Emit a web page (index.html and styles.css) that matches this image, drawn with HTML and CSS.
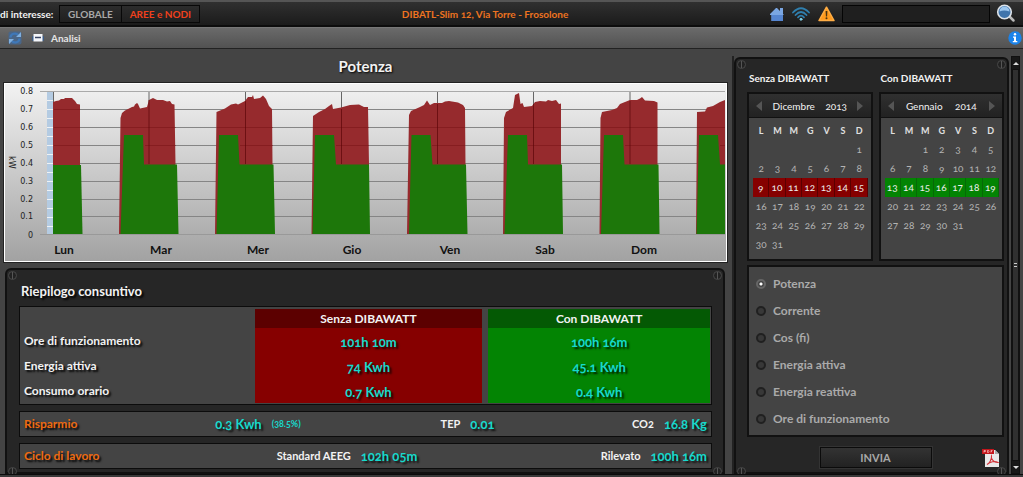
FILE: index.html
```html
<!DOCTYPE html>
<html lang="it">
<head>
<meta charset="utf-8">
<title>DIBAWATT - Analisi</title>
<link rel="stylesheet" href="styles.css">
</head>
<body>
<header class="topbar">
  <span class="topbar-label">di interesse:</span>
  <div class="segmented">
    <button type="button">GLOBALE</button>
    <button type="button" class="active">AREE e NODI</button>
  </div>
  <div class="site">DIBATL-Slim 12, Via Torre - Frosolone</div>
  <div class="status">
    <svg width="14" height="14" viewBox="0 0 14 14"><path d="M0 7 6 1l1 0 3 3V1h3v6l1 1h-1v6H1.500V8H0z" fill="#7aa6e2"/><path d="M1.500 8H13v6h-11.500z" fill="#5585d0"/></svg>
    <svg width="18" height="14" viewBox="0 0 18 14" fill="none" stroke="#2f7fae" stroke-width="1.800" stroke-linecap="round"><path d="M1 5.500Q9-3 17 5.500"/><path d="M3.500 8Q9 2 14.500 8"/><path d="M6 10.300Q9 7 12 10.300"/><circle cx="9" cy="12.300" r="1" fill="#7fd0e8" stroke="#7fd0e8" stroke-width="1"/></svg>
    <svg width="17" height="16" viewBox="0 0 17 16"><path d="M8.500 1.200 16 14.500H1z" fill="#ff9a1c" stroke="#ffad45" stroke-width="1.500" stroke-linejoin="round"/><path d="M7.600 5h1.800l-.3 5.500H7.900z" fill="#4a3413"/><circle cx="8.500" cy="12.300" r="1" fill="#4a3413"/></svg>
  </div>
  <input class="search" type="text" aria-label="Cerca">
  <button type="button" class="icon-button search-button" aria-label="Avvia ricerca">
    <svg width="20" height="19" viewBox="0 0 20 19"><path d="m13 12 4.500 4.500" stroke="#b9b9b9" stroke-width="2.500" stroke-linecap="round"/><circle cx="8.500" cy="8" r="6.800" fill="#3f74ac" stroke="#dce2e8" stroke-width="1.600"/><path d="M3.500 7.500a5 5 0 0 1 10 0Q8 5.500 3.500 7.500z" fill="#9cc6ee"/></svg>
  </button>
</header>

<nav class="toolbar">
  <button type="button" class="icon-button" aria-label="Aggiorna">
    <svg width="14" height="14" viewBox="0 0 14 14" fill="none" stroke="#3f78b8" stroke-width="2.200"><rect x=".5" y=".5" width="13" height="13" rx="2" fill="#4a6688" stroke="none"/><path d="M2.500 6.500C2.500 2.500 8 1.500 10 4"/><path d="M11.500 7.500C11.500 11.500 6 12.500 4 10"/><path d="M13 1v5H8zM1 13V8h5z" fill="#7fb0e0" stroke="none"/></svg>
  </button>
  <svg class="sheet" width="12" height="10" viewBox="0 0 12 10"><rect x="0" y="3" width="12" height="5" rx="1" fill="#3c5c86"/><rect x="1.500" y="1" width="9" height="7.500" fill="#f4f6fa"/><path d="M3 4.500h6" stroke="#3a4664" stroke-width="1.500"/></svg>
  <span class="toolbar-title">Analisi</span>
  <button type="button" class="icon-button info" aria-label="Informazioni">
    <svg width="14" height="14" viewBox="0 0 14 14"><circle cx="7" cy="7" r="6.700" fill="#1b83ea"/><path d="M5 5.500h3V10h1.300v1.200H4.800V10H6V6.700H5z" fill="#fff"/><circle cx="7" cy="3.300" r="1.200" fill="#fff"/></svg>
  </button>
</nav>

<main class="workspace">
  <section class="left">
    <h1 class="chart-title">Potenza</h1>
    <figure class="chart">
      <svg viewBox="5 84 721 177" role="img" aria-label="Potenza in kW per giorno della settimana">
        <path d="M47 91.500h6v143h-6z" fill="#b4cbe2"/>
        <path d="M47 100.500h6m-6 9h6m-6 9h6m-6 9h6m-6 9h6m-6 9h6m-6 9h6m-6 9h6m-6 9h6m-6 9h6m-6 9h6m-6 9h6m-6 9h6m-6 9h6m-6 9h6" stroke="#eef2f6"/>
        <path d="M40 91.500h685" stroke="#aaa"/>
        <path d="M53 109.500h672M53 127.500h672M53 145.500h672M53 163.500h672M53 181.500h672M53 199.500h672M53 216.500h672" stroke="#858585"/>
        <path d="M40 234.500h685" stroke="#999"/>
        <path d="M53.500 92v142M149 92v142M245.500 92v142M341.500 92v142M437.500 92v142M533.500 92v142M630 92v142" stroke="#666"/>
        <g fill="#962a2d">
          <path d="M53 234V102l3-1 3-.5 2-1.500h3l1-1h7l3 3 2 3 3 .5V234z"/>
          <path d="M119 234 120.500 118l1.500-5 3-2.500 7-3.500 2-.500 1-2 2-1.500 1 1 2 4.500 7-1.500 2-7 4-2 2 1 2 1 6 0 4 1.500 3-.500 2 3 2.500.5 1 60V234z"/>
          <path d="M215 234 216.500 112l8.500-3.500 6-4 5-1 2 1 7-3.500 3-4h4l1-2 1 4 6-1 3-2.500 3 3.500 3 7 3 3 .5 55V234z"/>
          <path d="M311.500 234 313 116l6-4 6-3 4-3 3-2 1 5 8-1.500 9-2.500 9-.5 5 2.500 4 0 1 58V234z"/>
          <path d="M407 234 409 115l2-4 9-4 4-2 3-4.500 3 4.500 4-2h8l3-1.500 4-.5 9 1.500 5 2.500 2 3 .5 58V234z"/>
          <path d="M503 234 504 118l2-6 7-4 2-13 4-2 1.500 11 2-1 1.500 4 8-1 3-4 5-1 6 .5 2-1.500 4 1 4-1 3 4 2-.500V234z"/>
          <path d="M599.500 234 600.500 118l1.500-6 10-2 5-2 3-4 10-4 7 0 3-1.500 2-1.500 3 3.500 9 .5 3.500 1.500V234z"/>
          <path d="M696 234 697 112l8-.500 2-4 6-1.500 7-4 5-2V234z"/>
        </g>
        <g fill="#1d770a">
          <path d="M53 234v-69h28l1.500 69z"/>
          <path d="M120.500 234 124 135h19l1 29.500h33l1.500 69.500z"/>
          <path d="M216.500 234 219 135h19l1.500 29.500h34L275 234z"/>
          <path d="M312.500 234 315 135h19l2 29.500h33L370 234z"/>
          <path d="M409 234 411.500 135h19l2 29.500h33.500l1.500 69.500z"/>
          <path d="M504.500 234 508 135h19l1 29.500h34l1 69.500z"/>
          <path d="M601 234 604 135h19l1.500 29.500h34l1 69.500z"/>
          <path d="M696.500 234 699 135h19l2 29.500h5V234z"/>
        </g>
        <path d="M54 109.500h26M54 127.500h26M54 145.500h26M121 127.500h55M145 145.500h31M217 127.500h56M240 145.500h33M313 127.500h56M336 145.500h33M409 127.500h56M432 145.500h33M505 127.500h56M528 145.500h33M601 127.500h57M625 145.500h33M697 127.500h28M720 145.500h5" stroke="#6b0508" stroke-opacity=".35" fill="none"/>
        <path d="M149 100v64M245.500 101v63M341.500 109v55M437.500 104v60M533.500 104v60M630 101v63" stroke="#5b0508" stroke-opacity=".7" fill="none"/>
        <g class="axis" text-anchor="end">
          <text x="33" y="94">0.8</text><text x="33" y="112">0.7</text><text x="33" y="130">0.6</text><text x="33" y="148">0.5</text><text x="33" y="166">0.4</text><text x="33" y="184">0.3</text><text x="33" y="202">0.2</text><text x="33" y="219">0.1</text><text x="33" y="238">0</text>
          <text class="unit" transform="translate(9 156) rotate(90)" text-anchor="start">kW</text>
        </g>
        <g class="days" text-anchor="middle">
          <text x="64" y="254">Lun</text><text x="161" y="254">Mar</text><text x="258" y="254">Mer</text><text x="352" y="254">Gio</text><text x="450" y="254">Ven</text><text x="545" y="254">Sab</text><text x="644" y="254">Dom</text>
        </g>
      </svg>
    </figure>

    <section class="panel summary">
      <i class="screw tl"></i><i class="screw tr"></i><i class="screw bl"></i><i class="screw br"></i>
      <h2>Riepilogo consuntivo</h2>
      <div class="box">
        <table class="compare">
          <thead><tr><td></td><th scope="col" class="without">Senza DIBAWATT</th><th scope="col" class="with">Con DIBAWATT</th></tr></thead>
          <tbody>
            <tr><th scope="row">Ore di funzionamento</th><td class="without">101h 10m</td><td class="with">100h 16m</td></tr>
            <tr><th scope="row">Energia attiva</th><td class="without">74 Kwh</td><td class="with">45.1 Kwh</td></tr>
            <tr><th scope="row">Consumo orario</th><td class="without">0.7 Kwh</td><td class="with">0.4 Kwh</td></tr>
          </tbody>
        </table>
      </div>
      <div class="box strip">
        <h3>Risparmio</h3>
        <p class="saving"><b>0.3 Kwh</b><small>(38.5%)</small></p>
        <p><span>TEP</span><b>0.01</b></p>
        <p class="last"><span>CO2</span><b>16.8 Kg</b></p>
      </div>
      <div class="box strip cycle">
        <h3>Ciclo di lavoro</h3>
        <p><span>Standard AEEG</span><b>102h 05m</b></p>
        <p class="last"><span>Rilevato</span><b>100h 16m</b></p>
      </div>
    </section>
  </section>

  <aside class="panel side">
    <i class="screw tl"></i><i class="screw tr"></i><i class="screw bl"></i><i class="screw br"></i>
    <div class="calendars">
      <section>
        <h2>Senza DIBAWATT</h2>
        <div class="calendar red">
          <div class="month"><button type="button" class="prev" aria-label="Mese precedente"></button><span>Dicembre</span><span>2013</span><button type="button" class="next" aria-label="Mese successivo"></button></div>
          <table>
            <thead><tr><th>L</th><th>M</th><th>M</th><th>G</th><th>V</th><th>S</th><th>D</th></tr></thead>
            <tbody>
              <tr><td></td><td></td><td></td><td></td><td></td><td></td><td>1</td></tr>
              <tr><td>2</td><td>3</td><td>4</td><td>5</td><td>6</td><td>7</td><td>8</td></tr>
              <tr class="selected"><td>9</td><td>10</td><td>11</td><td>12</td><td>13</td><td>14</td><td>15</td></tr>
              <tr><td>16</td><td>17</td><td>18</td><td>19</td><td>20</td><td>21</td><td>22</td></tr>
              <tr><td>23</td><td>24</td><td>25</td><td>26</td><td>27</td><td>28</td><td>29</td></tr>
              <tr><td>30</td><td>31</td><td></td><td></td><td></td><td></td><td></td></tr>
            </tbody>
          </table>
        </div>
      </section>
      <section>
        <h2>Con DIBAWATT</h2>
        <div class="calendar green">
          <div class="month"><button type="button" class="prev" aria-label="Mese precedente"></button><span>Gennaio</span><span>2014</span><button type="button" class="next" aria-label="Mese successivo"></button></div>
          <table>
            <thead><tr><th>L</th><th>M</th><th>M</th><th>G</th><th>V</th><th>S</th><th>D</th></tr></thead>
            <tbody>
              <tr><td></td><td></td><td>1</td><td>2</td><td>3</td><td>4</td><td>5</td></tr>
              <tr><td>6</td><td>7</td><td>8</td><td>9</td><td>10</td><td>11</td><td>12</td></tr>
              <tr class="selected"><td>13</td><td>14</td><td>15</td><td>16</td><td>17</td><td>18</td><td>19</td></tr>
              <tr><td>20</td><td>21</td><td>22</td><td>23</td><td>24</td><td>25</td><td>26</td></tr>
              <tr><td>27</td><td>28</td><td>29</td><td>30</td><td>31</td><td></td><td></td></tr>
            </tbody>
          </table>
        </div>
      </section>
    </div>
    <div class="measures">
      <label><input type="radio" name="measure" checked>Potenza</label>
      <label><input type="radio" name="measure">Corrente</label>
      <label><input type="radio" name="measure">Cos (fi)</label>
      <label><input type="radio" name="measure">Energia attiva</label>
      <label><input type="radio" name="measure">Energia reattiva</label>
      <label><input type="radio" name="measure">Ore di funzionamento</label>
    </div>
    <div class="actions">
      <button type="button" class="submit">INVIA</button>
      <button type="button" class="icon-button pdf" aria-label="Esporta PDF">
        <svg width="18" height="18" viewBox="0 0 18 18"><path d="M3 1h10l4 4v13H3z" fill="#e9e9e9"/><path d="M13 1v4h4z" fill="#aaa"/><path d="M0 0h12v5H0z" fill="#c4161c"/><path d="M2 3.500V1.500h1.500v1H2M5.500 1.500v2h1l.5-1-.5-1zM9 3.500v-2h1.500M9 2.500h1" fill="none" stroke="#f3b5b5" stroke-width=".8"/><path d="M5 15.500c2-1 5-5 4.500-8.500C8.500 9.500 12 14 16 13.500 13 11.500 8 13 5 15.500z" fill="none" stroke="#d3343a" stroke-width="1.100"/></svg>
      </button>
    </div>
  </aside>
  <div class="scrollbar"><button type="button" class="up" aria-label="Scorri su"></button><div class="thumb"><i></i></div><button type="button" class="down" aria-label="Scorri giù"></button></div>
</main>
<footer class="bottom-edge"></footer>
</body>
</html>
```
FILE: styles.css
```css
* { box-sizing: border-box; }

body {
  margin: 0;
  min-height: 100vh;
  display: flex;
  flex-direction: column;
  overflow: hidden;
  background: #444;
  color: #f2f2f2;
  font-family: Lato, "Open Sans", sans-serif;
  font-size: 12px;
  line-height: 18px;
  font-variant-numeric: oldstyle-nums;
}

h1, h2, h3, p, figure { margin: 0; }
button, input { font: inherit; }
button { padding: 0; cursor: pointer; }
svg { display: block; }
.icon-button { border: 0; background: none; }

.topbar {
  height: 27px;
  display: flex;
  align-items: center;
  border-top: 2px solid #555;
  border-bottom: 2px solid #0c0c0c;
  background: linear-gradient(#303030, #1b1b1b);
}
.topbar-label { width: 59px; font-weight: 700; font-size: 10px; white-space: nowrap; }
.segmented { display: flex; }
.segmented button {
  height: 18px;
  padding: 0 8px;
  border: 1px solid #080808;
  background: linear-gradient(#2c2c2c, #202020);
  color: #a8a8a8;
  font-size: 10px;
  font-weight: 700;
  line-height: 16px;
}
.segmented button + button { margin-left: -1px; }
.segmented .active { color: #f0401c; }
.site { flex: 1; text-align: center; color: #ee7320; font-size: 10px; font-weight: 700; }
.status { display: flex; align-items: center; gap: 8px; margin-right: 7px; }
.search {
  width: 148px;
  height: 18px;
  border: 1px solid #050505;
  background: #1f1f1f;
  color: #ddd;
}
.search-button { margin: 0 7px 0 6px; }

.toolbar {
  height: 22px;
  display: flex;
  align-items: center;
  padding: 0 1px 0 8px;
  border-top: 1px solid #777;
  border-bottom: 1px solid #222;
  background: linear-gradient(#6a6a6a, #525252);
}
.sheet { margin: 0 7px 0 10px; }
.toolbar-title { font-size: 10px; font-weight: 700; color: #e4e4e4; }
.info { margin-left: auto; }

.workspace {
  flex: 1;
  display: grid;
  grid-template-columns: minmax(0, 1fr) 277px 9px;
  padding: 7px 3px 0 0;
}
.left {
  display: flex;
  flex-direction: column;
  padding: 0 5px 0 4px;
  border-right: 2px solid #222;
}
.chart-title {
  margin: 0 0 7px;
  font-size: 15px;
  line-height: 20px;
  text-align: center;
  text-shadow: 1px 1px 2px #000;
}
.chart { border: 1px solid #fff; outline: 1px solid #222; background: linear-gradient(#f2f2f2, #a2a2a2); }
.chart svg { width: 100%; height: auto; }
.axis { font: 8px "DejaVu Sans", sans-serif; fill: #222; font-variant-numeric: normal; }
.days { font-size: 12px; font-weight: 700; fill: #111; }

.panel {
  position: relative;
  border: 2px solid #111;
  border-radius: 6px 6px 0 0;
  background: #262626;
}
.screw {
  position: absolute;
  width: 9px;
  height: 9px;
  border: 1px solid #484848;
  border-radius: 50%;
  background: linear-gradient(90deg, #222 3px, #555 3px, #555 4px, #222 4px);
}
.tl { top: 1px; left: 1px; }
.tr { top: 1px; right: 1px; }
.bl { bottom: -4px; left: 1px; }
.br { bottom: -4px; right: 1px; }

.summary {
  flex: 1;
  display: flex;
  flex-direction: column;
  gap: 6px;
  margin: 6px 2px 0 1px;
  padding: 12px 11px 0 12px;
}
.summary h2 {
  padding-left: 2px;
  font-size: 13px;
  line-height: 18px;
  text-shadow: 2px 2px 2px #000;
}
.box { border: 1px solid #0c0c0c; background: #444; }
.compare { width: 100%; table-layout: fixed; border-collapse: separate; border-spacing: 0; padding: 2px 1px 1px 0; }
.compare td, .compare th { padding: 2px 0 0; text-align: center; height: 25px; }
.compare thead th, .compare thead td { height: 19px; padding: 0; line-height: 18px; }
.compare thead td { width: 34%; }
.compare tbody th { padding: 4px 0 0 4px; text-align: left; vertical-align: top; text-shadow: 2px 2px 2px #000; }
.compare tbody td, .strip b { color: #17d9cc; font-size: 13px; font-weight: 700; text-shadow: 2px 2px 2px rgba(0, 0, 0, .8); }
.compare td.without { background: #860000; }
.compare td.with { background: #038403; }
.compare th.without { background: #5c0000; }
.compare th.with { background: #045904; }
.compare .with, .compare th.with { background-clip: padding-box; border-left: 6px solid #444; }

.strip {
  height: 26px;
  display: grid;
  grid-template-columns: 28% 33% 1fr 1fr;
  align-items: center;
  padding: 0 4px;
}
.cycle { grid-template-columns: 37% 1fr 1fr; }
.strip h3 { font-size: 12px; color: #ee6a10; text-shadow: 2px 2px 2px #000; }
.strip p { display: flex; align-items: center; gap: 10px; font-size: 11px; font-weight: 700; }
.strip .last { justify-content: flex-end; }
.strip small { color: #17d9cc; font-size: 9px; font-weight: 700; }

.side { margin: 1px 2px 0 0; padding: 9px 3px 0 11px; }
.calendars { display: grid; grid-template-columns: 1fr 1fr; gap: 6px; }
.calendars h2 { margin-bottom: 4px; padding-left: 2px; font-size: 10px; line-height: 20px; }
.calendar { height: 169px; border: 2px solid #111; background: #444; }
.month {
  height: 24px;
  display: flex;
  align-items: center;
  justify-content: space-between;
  padding: 0 7px;
  border-bottom: 1px solid #111;
  background: linear-gradient(#303030, #222);
  font-size: 10px;
}
.month button { width: 0; height: 0; border: 5px solid transparent; background: none; }
.month .prev { border-right: 6px solid #555; border-left: 0; }
.month .next { border-left: 6px solid #555; border-right: 0; }
.calendar table {
  width: 100%;
  table-layout: fixed;
  border-collapse: separate;
  border-spacing: 0;
  padding: 3px 3px 0 4px;
  font-size: 10px;
}
.calendar td, .calendar th { height: 19px; padding: 0; text-align: center; line-height: 17px; }
.calendar td { color: #b4b4b4; }
.calendar th { color: #e0e0e0; font-size: 9px; }
.calendar .selected td { border: solid #5a0000; border-width: 0 1px 0 0; background: #860000; color: #eee; }
.calendar.green .selected td { border-color: #076907; background: #038403; }

.measures {
  display: grid;
  grid-auto-rows: 27px;
  align-items: center;
  margin-top: 4px;
  padding: 3px 7px;
  border: 2px solid #111;
  background: #444;
}
.measures label { display: flex; align-items: center; gap: 7px; color: #aaa; font-weight: 700; }
.measures input {
  appearance: none;
  width: 10px;
  height: 10px;
  margin: 0;
  border: 2px solid #202020;
  border-radius: 50%;
  background: #383838;
}
.measures input:checked { border-color: #666; background: radial-gradient(#fff 1px, #444 2px); }
.actions { display: grid; grid-template-columns: 1fr 112px 1fr; align-items: center; margin-top: 10px; }
.submit {
  grid-column: 2;
  height: 21px;
  border: 1px solid #0b0b0b;
  outline: 1px solid #333;
  background: linear-gradient(#333, #222);
  color: #a8a8a8;
  font-size: 11px;
  font-weight: 700;
}
.pdf { justify-self: end; margin-right: 4px; }

.scrollbar { display: flex; flex-direction: column; border: 1px solid #111; background: #222; }
.scrollbar button { height: 12px; border: 0; background: #181818; }
.scrollbar button::before { content: ""; display: block; width: 0; margin: 0 auto; border: 3px solid transparent; }
.scrollbar .up::before { border-top-width: 0; border-bottom-color: #ddd; }
.scrollbar .down::before { border-bottom-width: 0; border-top-color: #ddd; }
.thumb { flex: 1; display: flex; align-items: center; justify-content: center; border: 1px solid #111; background: #303030; }
.thumb i { width: 3px; height: 4px; border: solid #ccc; border-width: 1px 0; }
.bottom-edge { height: 3px; border-top: 1px solid #0c0c0c; background: #3a3a3a; z-index: 1; }
```
